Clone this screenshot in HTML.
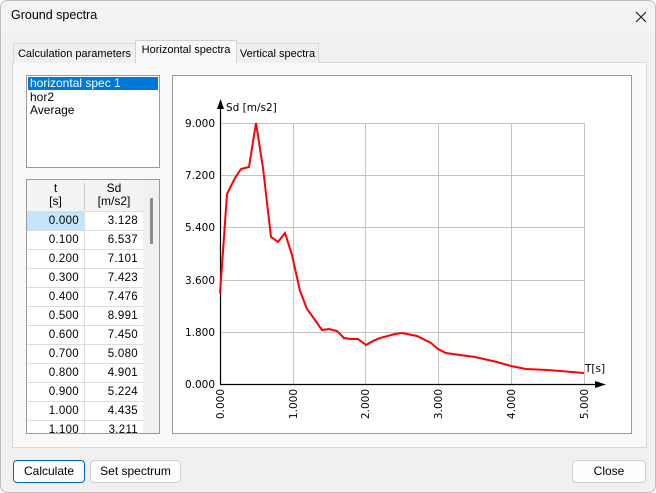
<!DOCTYPE html>
<html><head><meta charset="utf-8"><style>
*{box-sizing:border-box;margin:0;padding:0}
body{width:656px;height:493px;background:#fff;font-family:"Liberation Sans",sans-serif;font-size:12px;color:#000;position:relative;overflow:hidden}
.win{position:absolute;left:0;top:0;width:656px;height:493px;background:#f0f0f0;border:1px solid #bdbdbd;border-radius:7px;overflow:hidden}
.title{position:absolute;left:0;top:0;width:656px;height:31px;background:#f3f3f3}
.abs{position:absolute}
.tab{position:absolute;height:20px;border:1px solid #d9d9d9;border-bottom:none;background:#f0f0f0;padding:4px 0 0;text-align:center;white-space:nowrap;font-size:11px}
.panel{position:absolute;left:11px;top:61px;width:635px;height:386px;border:1px solid #d9d9d9;background:#f9f9f9}
.btn{position:absolute;top:459px;height:23px;border:1px solid #d0d0d0;border-radius:4px;background:#fdfdfd;text-align:center;line-height:21px}
.cell{position:absolute;height:19px;border-bottom:1px solid #dcdcdc;text-align:right;padding-right:5px;line-height:19px;font-size:11.5px;letter-spacing:.3px}
</style></head><body><div class="win">
<div class="title"></div>
<div class="abs" style="left:10px;top:7px;font-size:12.5px">Ground spectra</div>
<svg class="abs" style="left:633px;top:9px" width="14" height="14"><path d="M2 2L12 12M12 2L2 12" stroke="#222" stroke-width="1.2"/></svg>
<div class="panel"></div>
<div class="tab" style="left:12px;top:42px;width:123px">Calculation parameters</div>
<div class="tab" style="left:134px;top:39px;width:102px;height:23px;background:#f9f9f9;border-color:#d0d0d0;padding-top:3px">Horizontal spectra</div>
<div class="tab" style="left:235px;top:42px;width:83px">Vertical spectra</div>
<!-- listbox -->
<div class="abs" style="left:25px;top:74px;width:134px;height:93px;border:1px solid #9a9a9a;background:#fff"></div>
<div class="abs" style="left:27px;top:76px;width:130px;height:13px;background:#0078d7"></div>
<div class="abs" style="left:29px;top:75px;color:#fff">horizontal spec 1</div>
<div class="abs" style="left:29px;top:89px">hor2</div>
<div class="abs" style="left:29px;top:102px">Average</div>
<!-- table -->
<div class="abs" style="left:25px;top:178px;width:134px;height:255px;border:1px solid #9a9a9a;background:#fff;overflow:hidden">
<div class="abs" style="left:0;top:0;width:116px;height:32px;background:#f3f3f3;border-bottom:1px solid #dcdcdc"></div>
<div class="abs" style="left:57px;top:3px;width:1px;height:27px;background:#ccc"></div>
<div class="abs" style="left:0;top:2px;width:57px;text-align:center;line-height:13px">t<br>[s]</div>
<div class="abs" style="left:58px;top:2px;width:58px;text-align:center;line-height:13px">Sd<br>[m/s2]</div>
<div class="abs" style="left:116px;top:0;width:17px;height:255px;background:#f0f0f0"></div>
<div class="abs" style="left:123px;top:18px;width:3px;height:46px;background:#8a8a8a;border-radius:1px"></div>
<div class="abs" style="left:57px;top:32px;width:1px;height:230px;background:#dcdcdc"></div>
<div class="abs" style="left:0;top:32px;width:57px;height:19px;background:#c4e4fa"></div>
<div id="rows"></div>
</div>
<!-- chart -->
<div class="abs" style="left:171px;top:74px;width:460px;height:359px;border:1px solid #9a9a9a;background:#fff"></div>
<svg class="abs" style="left:0;top:0" width="656" height="493" font-family="DejaVu Sans, sans-serif" font-size="10.5">
<g stroke="#c4c4c4" stroke-width="1">
<path d="M292.5 122V383M364.5 122V383M437.5 122V383M510.5 122V383M583.5 122V383"/>
<path d="M219 122.5H583M219 174.5H583M219 226.5H583M219 279.5H583M219 331.5H583"/>
</g>
<path d="M219.5 383V104M219 383.5H598" stroke="#000" stroke-width="1.2"/>
<path d="M216 108L219.5 98L223 108Z M594 380L605 383.5L594 387Z"/>
<text x="225" y="110">Sd [m/s2]</text>
<text x="584" y="371">T[s]</text>
<g text-anchor="end">
<text x="214" y="126">9.000</text><text x="214" y="178">7.200</text><text x="214" y="230">5.400</text>
<text x="214" y="283">3.600</text><text x="214" y="335">1.800</text><text x="214" y="387">0.000</text>
</g>
<g text-anchor="end">
<text transform="translate(223,388) rotate(-90)">0.000</text>
<text transform="translate(296,388) rotate(-90)">1.000</text>
<text transform="translate(368,388) rotate(-90)">2.000</text>
<text transform="translate(441,388) rotate(-90)">3.000</text>
<text transform="translate(514,388) rotate(-90)">4.000</text>
<text transform="translate(587,388) rotate(-90)">5.000</text>
</g>
<polyline fill="none" stroke="#f00" stroke-width="2" points="219,292 222,250 226,193 230,185 234,177 240,168 248,166 255,122 262,167 270,236 277,241 284,232 291,254 299,290 306,308 314,319 321,329 328,328 336,330 343,337 350,338 357,338 365,344 372,340 379,337 394,333 401,332 416,335 430,342 437,348 445,352 459,354 474,356 496,361 510,365 525,368 547,369 583,372"/>
</svg>
<div class="btn" style="left:12px;width:72px;border:1px solid #0067c0">Calculate</div>
<div class="btn" style="left:89px;width:91px">Set spectrum</div>
<div class="btn" style="left:571px;width:74px">Close</div>
</div>
<script>
var d=[["0.000","3.128"],["0.100","6.537"],["0.200","7.101"],["0.300","7.423"],["0.400","7.476"],["0.500","8.991"],["0.600","7.450"],["0.700","5.080"],["0.800","4.901"],["0.900","5.224"],["1.000","4.435"],["1.100","3.211"]];
var h="";for(var i=0;i<d.length;i++){var y=32+i*19;h+='<div class="cell" style="left:0;top:'+y+'px;width:57px">'+d[i][0]+'</div><div class="cell" style="left:58px;top:'+y+'px;width:58px">'+d[i][1]+'</div>';}
document.getElementById("rows").innerHTML=h;
</script>
</body></html>
